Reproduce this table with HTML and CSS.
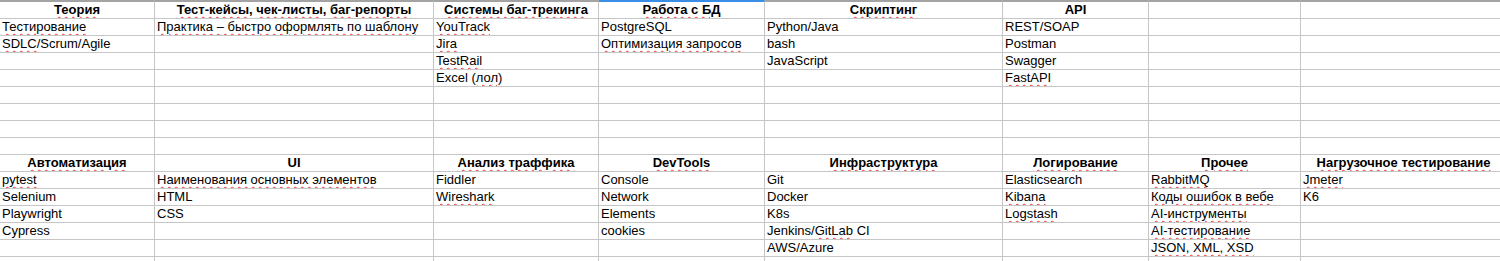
FILE: index.html
```html
<!DOCTYPE html>
<html lang="ru">
<head>
<meta charset="utf-8">
<title>Навыки тестировщика</title>
<link rel="stylesheet" href="styles.css">
</head>
<body>
<div class="sheet">
  <!-- row 1 -->
  <div class="c h top"><span class="sp">Теория</span></div>
  <div class="c h top"><span class="sp">Тест-кейсы</span>, <span class="sp">чек-листы</span>, <span class="sp">баг-репорты</span></div>
  <div class="c h top"><span class="sp">Системы баг-трекинга</span></div>
  <div class="c h top sel"><span class="sp">Работа с БД</span></div>
  <div class="c h top"><span class="sp">Скриптинг</span></div>
  <div class="c h top">API</div>
  <div class="c top"></div>
  <div class="c top"></div>
  <!-- row 2 -->
  <div class="c"><span class="sp">Тестирование</span></div>
  <div class="c"><span class="sp">Практика – быстро оформлять по шаблону</span></div>
  <div class="c"><span class="sp">YouTrack</span></div>
  <div class="c">PostgreSQL</div>
  <div class="c">Python/Java</div>
  <div class="c">REST/SOAP</div>
  <div class="c"></div>
  <div class="c"></div>
  <!-- row 3 -->
  <div class="c"><span class="sp">SDLC</span>/Scrum/Agile</div>
  <div class="c"></div>
  <div class="c"><span class="sp">Jira</span></div>
  <div class="c"><span class="sp">Оптимизация запросов</span></div>
  <div class="c">bash</div>
  <div class="c">Postman</div>
  <div class="c"></div>
  <div class="c"></div>
  <!-- row 4 -->
  <div class="c"></div>
  <div class="c"></div>
  <div class="c"><span class="sp">TestRail</span></div>
  <div class="c"></div>
  <div class="c">JavaScript</div>
  <div class="c">Swagger</div>
  <div class="c"></div>
  <div class="c"></div>
  <!-- row 5 -->
  <div class="c"></div>
  <div class="c"></div>
  <div class="c">Excel <span class="sp">(лол)</span></div>
  <div class="c"></div>
  <div class="c"></div>
  <div class="c"><span class="sp">FastAPI</span></div>
  <div class="c"></div>
  <div class="c"></div>
  <!-- rows 6-9 -->
  <div class="c"></div><div class="c"></div><div class="c"></div><div class="c"></div><div class="c"></div><div class="c"></div><div class="c"></div><div class="c"></div>
  <div class="c"></div><div class="c"></div><div class="c"></div><div class="c"></div><div class="c"></div><div class="c"></div><div class="c"></div><div class="c"></div>
  <div class="c"></div><div class="c"></div><div class="c"></div><div class="c"></div><div class="c"></div><div class="c"></div><div class="c"></div><div class="c"></div>
  <div class="c"></div><div class="c"></div><div class="c"></div><div class="c"></div><div class="c"></div><div class="c"></div><div class="c"></div><div class="c"></div>
  <!-- row 10 -->
  <div class="c h"><span class="sp">Автоматизация</span></div>
  <div class="c h">UI</div>
  <div class="c h"><span class="sp">Анализ траффика</span></div>
  <div class="c h"><span class="sp">DevTools</span></div>
  <div class="c h"><span class="sp">Инфраструктура</span></div>
  <div class="c h"><span class="sp">Логирование</span></div>
  <div class="c h"><span class="sp">Прочее</span></div>
  <div class="c h"><span class="sp">Нагрузочное тестирование</span></div>
  <!-- row 11 -->
  <div class="c"><span class="sp">pytest</span></div>
  <div class="c"><span class="sp">Наименования основных элементов</span></div>
  <div class="c">Fiddler</div>
  <div class="c">Console</div>
  <div class="c">Git</div>
  <div class="c">Elasticsearch</div>
  <div class="c"><span class="sp">RabbitMQ</span></div>
  <div class="c"><span class="sp">Jmeter</span></div>
  <!-- row 12 -->
  <div class="c">Selenium</div>
  <div class="c">HTML</div>
  <div class="c"><span class="sp">Wireshark</span></div>
  <div class="c">Network</div>
  <div class="c">Docker</div>
  <div class="c"><span class="sp">Kibana</span></div>
  <div class="c"><span class="sp">Коды ошибок в вебе</span></div>
  <div class="c">K6</div>
  <!-- row 13 -->
  <div class="c">Playwright</div>
  <div class="c">CSS</div>
  <div class="c"></div>
  <div class="c">Elements</div>
  <div class="c">K8s</div>
  <div class="c"><span class="sp">Logstash</span></div>
  <div class="c"><span class="sp">AI-инструменты</span></div>
  <div class="c"></div>
  <!-- row 14 -->
  <div class="c">Cypress</div>
  <div class="c"></div>
  <div class="c"></div>
  <div class="c">cookies</div>
  <div class="c">Jenkins/<span class="sp">GitLab</span> CI</div>
  <div class="c"></div>
  <div class="c"><span class="sp">AI-тестирование</span></div>
  <div class="c"></div>
  <!-- row 15 -->
  <div class="c"></div>
  <div class="c"></div>
  <div class="c"></div>
  <div class="c"></div>
  <div class="c">AWS/Azure</div>
  <div class="c"></div>
  <div class="c"><span class="sp">JSON, XML, XSD</span></div>
  <div class="c"></div>
  <!-- row 16 -->
  <div class="c"></div><div class="c"></div><div class="c"></div><div class="c"></div><div class="c"></div><div class="c"></div><div class="c"></div><div class="c"></div>
</div>
</body>
</html>
```

FILE: styles.css
```css
html, body {
  margin: 0;
  padding: 0;
  background: #ffffff;
  overflow: hidden;
}

.sheet {
  display: grid;
  grid-template-columns: 155px 279px 165px 166px 238px 146px 152px 206px;
  grid-template-rows: 19px;
  grid-auto-rows: 17px;
  width: 1507px;
  font-family: "Liberation Sans", Arial, sans-serif;
  font-size: 13px;
  color: #000000;
}

.c {
  box-sizing: border-box;
  border-right: 1px solid #c6c6c6;
  border-bottom: 1px solid #c6c6c6;
  padding: 0 2px;
  line-height: 16px;
  white-space: nowrap;
  overflow: hidden;
}

.c.top {
  border-top: 2px solid #a3a3a3;
}

.c.top.sel {
  border-top-color: #3a8ee6;
}

.h {
  font-weight: bold;
  text-align: center;
}

.sp {
  text-decoration-line: underline;
  text-decoration-style: wavy;
  text-decoration-color: #ee3030;
  text-decoration-thickness: 1px;
  text-underline-offset: 2px;
}
```
